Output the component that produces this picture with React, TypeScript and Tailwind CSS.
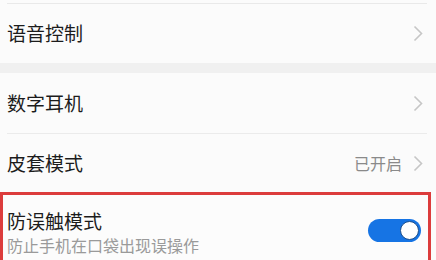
const font = { fontFamily: '"Noto Sans CJK SC", "Noto Sans", sans-serif' };

function Chevron() {
  return (
    <svg width="10" height="17" viewBox="0 0 10 17" className="shrink-0">
      <polyline points="1.5,1.5 8.5,8.5 1.5,15.5" fill="none" stroke="#c6c6c6" strokeWidth="1.6" />
    </svg>
  );
}

function Row({ label, value, h }: { label: string; value?: string; h: string }) {
  return (
    <div className={`flex items-center justify-between pl-[7px] pr-[13px] ${h}`}>
      <span className="text-[19px] text-[#1c1c1c]">{label}</span>
      <div className="flex items-center gap-[11px]">
        {value && <span className="text-[16px] text-[#8a8a8a]">{value}</span>}
        <Chevron />
      </div>
    </div>
  );
}

export default function App() {
  return (
    <main className="h-[260px] w-[436px] overflow-hidden bg-[#fbfbfb]" style={font}>
      <div className="h-[3px]" />
      <div className="ml-[7px] mr-[9px] h-px bg-[#e9e9e9]" />
      <Row label="语音控制" h="h-[59px]" />
      <div className="h-[10px] bg-[#f0f0f0]" />
      <Row label="数字耳机" h="h-[60px]" />
      <div className="ml-[7px] mr-[9px] h-px bg-[#ebebeb]" />
      <Row label="皮套模式" value="已开启" h="h-[58px]" />
      <div className="h-[100px] w-[431px] border-[3px] border-[#dc3c3c] bg-[#fcfcfc]">
        <div className="flex items-start justify-between pl-[4px] pr-[7px] pt-[13px]">
          <div className="flex flex-col">
            <span className="text-[19px] leading-[26px] text-[#1c1c1c]">防误触模式</span>
            <span className="text-[16px] leading-[22px] text-[#9a9a9a]">防止手机在口袋出现误操作</span>
          </div>
          <div className="relative mt-[11px] h-[23px] w-[53px] rounded-full bg-[#1674e4]">
            <div className="absolute right-[2px] top-[2px] h-[19px] w-[19px] rounded-full border border-[#1d4f8c] bg-white" />
          </div>
        </div>
      </div>
    </main>
  );
}
